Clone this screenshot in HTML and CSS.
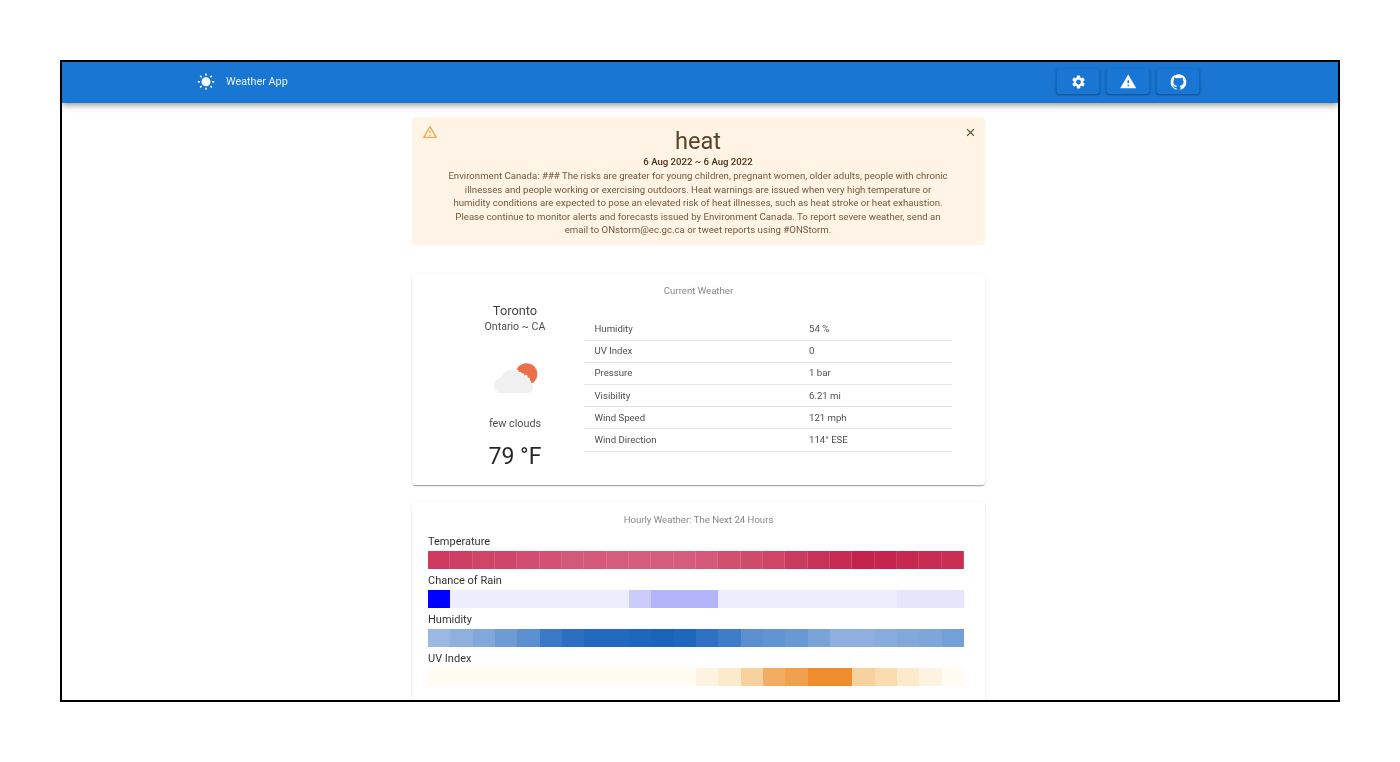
FILE: index.html
```html
<!DOCTYPE html>
<html lang="en">
<head>
<meta charset="utf-8">
<title>Weather App</title>
<link rel="stylesheet" href="styles.css">
</head>
<body>
<div class="frame">
  <header class="appbar">
    <div class="brand">
      <svg class="sun" viewBox="0 0 24 24"><path d="M6.76 4.84l-1.8-1.79-1.41 1.41 1.79 1.79 1.42-1.41zM4 10.5H1v2h3v-2zm9-9.95h-2V3.5h2V.55zm7.45 3.91l-1.41-1.41-1.79 1.79 1.41 1.41 1.79-1.79zm-3.21 13.7l1.79 1.8 1.41-1.41-1.8-1.79-1.4 1.4zM20 10.5v2h3v-2h-3zm-8-5c-3.31 0-6 2.69-6 6s2.69 6 6 6 6-2.69 6-6-2.69-6-6-6zm-1 16.95h2V19.5h-2v2.95zm-7.45-3.91l1.41 1.41 1.79-1.8-1.41-1.41-1.79 1.8z"/></svg>
      <span class="brand-name">Weather App</span>
    </div>
    <div class="actions">
      <button class="action"><svg viewBox="0 0 24 24"><path d="M19.14 12.94c.04-.3.06-.61.06-.94 0-.32-.02-.64-.07-.94l2.03-1.58c.18-.14.23-.41.12-.61l-1.92-3.32c-.12-.22-.37-.29-.59-.22l-2.39.96c-.5-.38-1.03-.7-1.62-.94l-.36-2.54c-.04-.24-.24-.41-.48-.41h-3.84c-.24 0-.43.17-.47.41l-.36 2.54c-.59.24-1.13.57-1.62.94l-2.39-.96c-.22-.08-.47 0-.59.22L2.74 8.87c-.12.21-.08.47.12.61l2.03 1.58c-.05.3-.09.63-.09.94s.02.64.07.94l-2.03 1.58c-.18.14-.23.41-.12.61l1.92 3.32c.12.22.37.29.59.22l2.39-.96c.5.38 1.03.7 1.62.94l.36 2.54c.05.24.24.41.48.41h3.84c.24 0 .44-.17.47-.41l.36-2.54c.59-.24 1.13-.56 1.62-.94l2.39.96c.22.08.47 0 .59-.22l1.92-3.32c.12-.22.07-.47-.12-.61l-2.01-1.58zM12 15.6c-1.98 0-3.6-1.62-3.6-3.6s1.62-3.6 3.6-3.6 3.6 1.62 3.6 3.6-1.62 3.6-3.6 3.6z"/></svg></button>
      <button class="action"><svg class="warn" viewBox="0 0 24 24"><path d="M1 21h22L12 2 1 21zm12-3h-2v-2h2v2zm0-4h-2v-4h2v4z"/></svg></button>
      <button class="action"><svg viewBox="0 0 24 24"><path d="M12 .3a12 12 0 0 0-3.8 23.4c.6.1.8-.3.8-.6v-2c-3.3.7-4-1.6-4-1.6-.6-1.4-1.4-1.8-1.4-1.8-1-.7.1-.7.1-.7 1.2 0 1.9 1.2 1.9 1.2 1 1.8 2.8 1.3 3.5 1 0-.8.4-1.3.7-1.6-2.7-.3-5.5-1.3-5.5-6 0-1.2.5-2.3 1.3-3.1-.2-.4-.6-1.6 0-3.2 0 0 1-.3 3.4 1.2a11.5 11.5 0 0 1 6 0c2.3-1.5 3.3-1.2 3.3-1.2.6 1.6.2 2.8 0 3.2.9.8 1.3 1.9 1.3 3.2 0 4.6-2.8 5.6-5.5 5.9.5.4.9 1 .9 2.2v3.3c0 .3.1.7.8.6A12 12 0 0 0 12 .3"/></svg></button>
    </div>
  </header>
  <main class="content">
    <section class="alert">
      <svg class="alert-icon" viewBox="0 0 24 24"><path d="M12 5.99L19.53 19H4.47L12 5.99M12 2L1 21h22L12 2zm1 14h-2v2h2v-2zm0-6h-2v4h2v-4z"/></svg>
      <div class="alert-body">
        <div class="alert-title">heat</div>
        <div class="alert-date">6 Aug 2022 ~ 6 Aug 2022</div>
        <p class="alert-text">Environment Canada: ### The risks are greater for young children, pregnant women, older adults, people with chronic illnesses and people working or exercising outdoors. Heat warnings are issued when very high temperature or humidity conditions are expected to pose an elevated risk of heat illnesses, such as heat stroke or heat exhaustion. Please continue to monitor alerts and forecasts issued by Environment Canada. To report severe weather, send an email to ONstorm@ec.gc.ca or tweet reports using #ONStorm.</p>
      </div>
      <svg class="alert-close" viewBox="0 0 24 24"><path d="M19 6.41L17.59 5 12 10.59 6.41 5 5 6.41 10.59 12 5 17.59 6.41 19 12 13.41 17.59 19 19 17.59 13.41 12z"/></svg>
    </section>

    <section class="card current">
      <h2 class="card-title">Current Weather</h2>
      <div class="current-grid">
        <div class="summary">
          <div class="city">Toronto</div>
          <div class="region">Ontario ~ CA</div>
          <svg class="weather-icon" viewBox="0 0 50 34">
            <circle class="w-sun" cx="34.5" cy="12" r="10.8"/>
            <path class="w-cut" d="M10 31a7.5 7.5 0 0 1-1-15 11 11 0 0 1 20-3 7.5 7.5 0 0 1 8 7 5.8 5.8 0 0 1 0 11z"/>
            <path class="w-cloud" d="M10 31a7.5 7.5 0 0 1-1-15 11 11 0 0 1 20-3 7.5 7.5 0 0 1 8 7 5.8 5.8 0 0 1 0 11z"/>
          </svg>
          <div class="condition">few clouds</div>
          <div class="temp">79 °F</div>
        </div>
        <div class="stats">
          <div class="stat"><span>Humidity</span><span>54 %</span></div>
          <div class="stat"><span>UV Index</span><span>0</span></div>
          <div class="stat"><span>Pressure</span><span>1 bar</span></div>
          <div class="stat"><span>Visibility</span><span>6.21 mi</span></div>
          <div class="stat"><span>Wind Speed</span><span>121 mph</span></div>
          <div class="stat"><span>Wind Direction</span><span>114° ESE</span></div>
        </div>
      </div>
    </section>

    <section class="card hourly">
      <h2 class="card-title">Hourly Weather: The Next 24 Hours</h2>
      <div class="metric">Temperature</div>
      <div class="heat" id="temp"></div>
      <div class="metric">Chance of Rain</div>
      <div class="heat" id="rain"></div>
      <div class="metric">Humidity</div>
      <div class="heat" id="hum"></div>
      <div class="metric">UV Index</div>
      <div class="heat" id="uv"></div>
    </section>
  </main>
</div>
<script src="app.js"></script>
</body>
</html>
```
FILE: styles.css
```css
* { box-sizing: border-box; }
html, body { margin: 0; padding: 0; background: #fff; }
body { font-family: Roboto, "Liberation Sans", sans-serif; color: rgba(0,0,0,.87); }
.frame {
  margin: 60px 0 0 60px;
  width: 1280px;
  height: 642px;
  border: 2px solid #000;
  overflow: hidden;
  background: #fff;
}
.appbar {
  height: 41px;
  background: #1976d2;
  color: #fff;
  display: flex;
  align-items: center;
  justify-content: space-between;
  padding: 0 138px 2px 135px;
  box-shadow: 0 2px 4px -1px rgba(0,0,0,.2), 0 4px 5px 0 rgba(0,0,0,.14), 0 1px 10px 0 rgba(0,0,0,.12);
  position: relative;
}
.brand { display: flex; align-items: center; gap: 11px; filter: blur(.3px); }
.sun { width: 18px; height: 18px; fill: #fff; display: block; }
.brand-name { font-size: 10.8px; line-height: 16px; color: #e8f1fb; }
.actions { display: flex; gap: 7px; transform: translateX(-.5px); }
.action {
  width: 43px;
  height: 25px;
  padding: 0;
  border: 0;
  border-radius: 3px;
  background: #1976d2;
  box-shadow: 0 1px 3px rgba(0,0,0,.25), 0 1px 1px rgba(0,0,0,.1);
  display: flex;
  align-items: center;
  justify-content: center;
}
.action svg { width: 16px; height: 16px; fill: #fff; display: block; }
.action .warn { width: 17.5px; height: 17.5px; }
.content {
  width: 573px;
  margin: 14px 0 0 350px;
  display: flex;
  flex-direction: column;
  filter: blur(.3px);
}
.alert {
  height: 128px;
  background: #fff4e5;
  border-radius: 3px;
  display: flex;
  padding: 7px 8px 0 10px;
  color: #663c00;
}
.alert-icon { width: 16px; height: 16px; fill: #f3a84b; flex: none; }
.alert-close { width: 13px; height: 13px; fill: #5d3c14; flex: none; margin-top: 2px; }
.alert-body { flex: 1; min-width: 0; text-align: center; padding: 0 6px 0 0; }
.alert-title { font-size: 23.6px; line-height: 28px; font-weight: 400; margin-top: 3px; color: #5c4326; }
.alert-date { font-size: 9.6px; line-height: 13px; font-weight: 500; color: #4a3013; }
.alert-text { width: 503px; margin: 1px auto 0; font-size: 9.65px; line-height: 13.6px; color: #75583a; }
.card {
  background: #fff;
  border-radius: 3px;
  box-shadow: 0 2px 1px -1px rgba(0,0,0,.2), 0 1px 1px 0 rgba(0,0,0,.14), 0 1px 3px 0 rgba(0,0,0,.12);
}
.current { height: 211px; margin-top: 29px; padding-top: 10px; }
.card-title { margin: 0; font-size: 9.6px; line-height: 14px; font-weight: 400; text-align: center; color: rgba(0,0,0,.5); }
.current-grid { display: flex; padding: 5px 33px 0 0; }
.summary { width: 172px; flex: none; padding-left: 34px; text-align: center; }
.city { font-size: 12.8px; line-height: 18px; margin-top: -1px; color: rgba(0,0,0,.75); }
.region { font-size: 10.6px; line-height: 14px; color: rgba(0,0,0,.72); }
.weather-icon { display: block; width: 50px; height: 34px; margin: 28px auto 0; transform: translateX(2px); }
.w-sun { fill: #ee6e4a; }
.w-cut { fill: #fff; stroke: #fff; stroke-width: 3.4; stroke-linecap: round; stroke-dasharray: 0 3.6; }
.w-cloud { fill: #f0f0f0; }
.condition { font-size: 10.8px; line-height: 14px; margin-top: 21px; color: rgba(0,0,0,.72); }
.temp { font-size: 23px; line-height: 28px; margin-top: 12px; color: rgba(0,0,0,.85); }
.stats { flex: 1; margin-top: 15.5px; }
.stat {
  height: 22.2px;
  display: grid;
  grid-template-columns: 214.5px 1fr;
  align-items: center;
  padding: 0 0 1px 10.5px;
  font-size: 9.6px;
  color: rgba(0,0,0,.72);
  border-bottom: 1px solid #e3e3e3;
}
.hourly { margin-top: 17px; height: 220px; padding: 11px 21px 0 16px; }
.hourly .card-title { margin-left: 5px; }
.metric { font-size: 11px; line-height: 14px; color: rgba(0,0,0,.82); margin-top: 5px; margin-bottom: 2px; }
.card-title + .metric { margin-top: 8px; }
.heat { display: grid; grid-template-columns: repeat(24, 1fr); height: 18px; }
#temp div { box-shadow: inset -1px 0 rgba(255,255,255,.14); }
```
FILE: app.js
```js
var data = {
  temp: ["#cf3a60","#cf3e64","#d04468","#d0466a","#d24c70","#d35274","#d55878","#d55a7a","#d65c7b","#d65c7b","#d65c7b","#d65c7b","#d55878","#d2506f","#d04a6c","#d04468","#ca3a5e","#c93258","#c62a52","#c3224c","#c4244e","#c7284f","#c72c52","#c92f55"],
  rain: ["#0000ff"],
  hum: ["#9ab8e2","#8fb0dd","#82a8d9","#6f9bd5","#5c8fd0","#3b78c6","#2c6fc2","#2268be","#2268be","#1f66bd","#1b62bb","#1f66bd","#2e70c3","#3f7cc8","#5c8fd0","#6095d2","#6899d3","#7aa4d8","#8fb0df","#8fb0df","#88acdc","#82a8da","#7fa6da","#73a0d7"],
  uv: []
};
var i;
for (i = 1; i < 24; i++) {
  data.rain.push(i === 9 ? "#ccccfc" : (i >= 10 && i <= 12) ? "#b4b4fd" : i >= 21 ? "#e5e5fb" : "#ededfe");
}
var uvTail = ["#fdf3e0","#fbeacb","#f8d29e","#f2ad63","#f0a14e","#ee8c2e","#ee8c2e","#f8d29e","#fadcb0","#fbeacb","#fdf3e0","#fefbf2"];
for (i = 0; i < 12; i++) data.uv.push("#fefbf2");
data.uv = data.uv.concat(uvTail);
Object.keys(data).forEach(function (key) {
  var row = document.getElementById(key);
  data[key].forEach(function (color) {
    var cell = document.createElement("div");
    cell.style.background = color;
    row.appendChild(cell);
  });
});
```
